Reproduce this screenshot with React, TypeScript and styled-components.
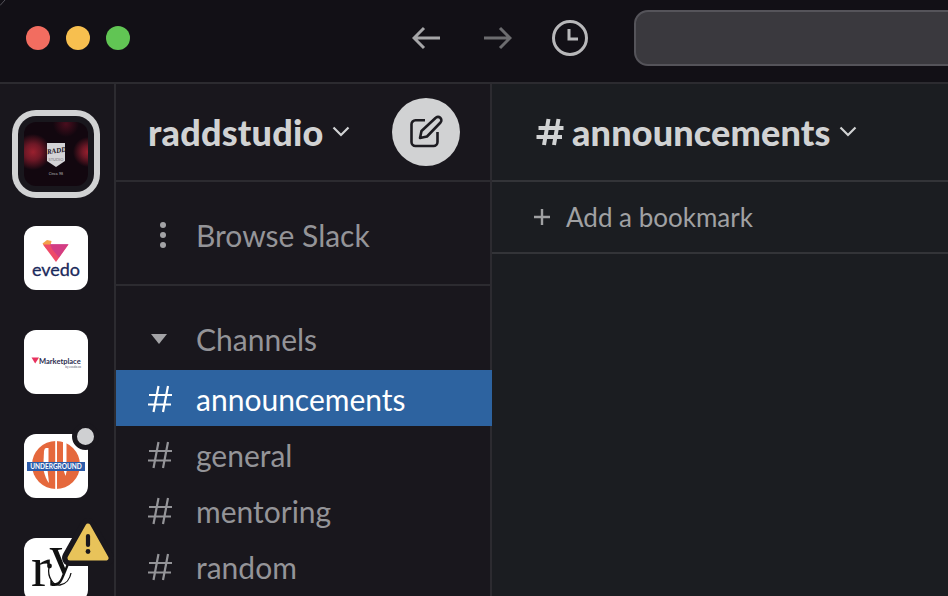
import React from "react";
import styled, { createGlobalStyle } from "styled-components";

const Global = createGlobalStyle`
  html, body { margin: 0; padding: 0; background: #19171d; }
  body { font-family: "Lato", "Liberation Sans", sans-serif; }
  * { box-sizing: border-box; }
`;

const Window = styled.div`
  position: relative; width: 948px; height: 596px; overflow: hidden;
  display: flex; flex-direction: column; background: #19171d;
`;
const Corner = styled.svg`position: absolute; left: 0; top: 0; display: block;`;
const TitleBar = styled.header`
  height: 84px; flex: none; display: flex; align-items: center;
  background: #121016; border-bottom: 2px solid #2c2b30;
  padding: 0 0 6px 26px; overflow: hidden;
`;
const Lights = styled.div`display: flex; gap: 16px; width: 374px; flex: none;`;
const Light = styled.span<{ $c: string }>`
  width: 24px; height: 24px; border-radius: 50%; background: ${(p) => p.$c};
`;
const Nav = styled.nav`display: flex; align-items: center; gap: 44px; width: 234px; flex: none; padding-left: 12px;`;
const NavIcon = styled.svg<{ $pull?: boolean }>`display: block; flex: none; margin-left: ${(p) => (p.$pull ? "-4px" : "0")};`;
const Search = styled.div`
  width: 400px; height: 56px; flex: none; border-radius: 14px;
  background: #3a393e; border: 2px solid #55545a;
`;
const Body = styled.div`flex: 1; display: flex; min-height: 0;`;
const Rail = styled.aside`
  width: 116px; flex: none; background: #19171d; border-right: 2px solid #2c2b30;
  display: flex; flex-direction: column; align-items: flex-start; gap: 40px;
  padding: 38px 0 0 24px; overflow: hidden;
`;
const Tile = styled.div<{ $selected?: boolean; $bg?: string }>`
  position: relative; width: 64px; height: 64px; flex: none; border-radius: 12px;
  background: ${(p) => p.$bg || "#fff"};
  box-shadow: ${(p) => (p.$selected ? "0 0 0 6px #19171d, 0 0 0 12px #d1d2d3" : "none")};
`;
const TileArt = styled.svg`display: block; width: 64px; height: 64px; border-radius: 12px;`;
const DotBadge = styled.span`
  position: absolute; left: 48px; top: -11px; width: 27px; height: 27px;
  border-radius: 50%; background: #cfd0d2; border: 5px solid #19171d;
`;
const WarnBadge = styled.svg`position: absolute; left: 38px; top: -20px; display: block;`;
const Sidebar = styled.section`
  width: 376px; flex: none; background: #19171d; border-right: 2px solid #2c2b30;
  display: flex; flex-direction: column;
`;
const WorkspaceHead = styled.div`
  height: 98px; flex: none; display: flex; align-items: center;
  padding: 0 30px 0 32px; border-bottom: 2px solid #2c2b30;
`;
const WorkspaceName = styled.h1`
  margin: 0; font-size: 36px; font-weight: 900; color: #d1d2d3; line-height: 1; letter-spacing: 0.2px;
`;
const Chevron = styled.svg`display: block; flex: none; margin-left: 8px;`;
const Compose = styled.button`
  margin-left: auto; width: 68px; height: 68px; border: 0; padding: 0; border-radius: 50%;
  background: #d1d2d3; display: flex; align-items: center; justify-content: center;
`;
const BrowseRow = styled.div`
  height: 104px; flex: none; display: flex; align-items: center;
  border-bottom: 2px solid #2c2b30; padding: 3px 0 0 42px; gap: 28px;
  font-size: 30px; color: #949498;
`;
const Dots = styled.span`display: flex; flex-direction: column; gap: 4px; width: 10px; align-items: center;`;
const Dot = styled.i`width: 6px; height: 6px; border-radius: 50%; background: #a3a3a6;`;
const ChannelHead = styled.div`
  height: 84px; flex: none; display: flex; align-items: center; padding: 33px 0 12px 35px; gap: 29px;
  font-size: 30px; color: #949498;
`;
const Caret = styled.span`
  width: 0; height: 0; border-left: 8px solid transparent; border-right: 8px solid transparent;
  border-top: 10px solid #a3a3a6;
`;
const ChannelRow = styled.div<{ $active?: boolean }>`
  height: 56px; flex: none; display: flex; align-items: center; padding: 1px 0 0 31px; gap: 23px;
  margin-right: ${(p) => (p.$active ? "-2px" : "0")};
  font-size: 30px; color: ${(p) => (p.$active ? "#fff" : "#949498")};
  background: ${(p) => (p.$active ? "#2d63a0" : "transparent")};
  position: relative;
`;
const Main = styled.main`flex: 1; min-width: 0; background: #1b1d21; display: flex; flex-direction: column;`;
const ChannelTitleBar = styled.div`
  height: 98px; flex: none; display: flex; align-items: center; padding-left: 44px;
  border-bottom: 2px solid #333438; font-size: 36px; font-weight: 900; color: #d1d2d3; letter-spacing: 0.15px;
`;
const TitleHash = styled.svg`display: block; flex: none; margin-right: 8px;`;
const Bookmarks = styled.div`
  height: 72px; flex: none; display: flex; align-items: center; padding-left: 41px; gap: 15px;
  border-bottom: 2px solid #333438; font-size: 26px; color: #a0a1a3;
`;
const RowHash = styled.svg`display: block; flex: none;`;

const Hash = () => (
  <RowHash width="26" height="30" viewBox="0 0 26 30">
    <path d="M11.5 2 L6.5 28 M21 2 L16 28 M2 11 H25 M1 20.5 H24" fill="none" stroke="currentColor" strokeWidth="2.2" />
  </RowHash>
);

const Down = () => (
  <Chevron width="18" height="18" viewBox="0 0 18 18">
    <path d="M1.5 4.5 L9 12 L16.5 4.5" fill="none" stroke="#d1d2d3" strokeWidth="2.2" />
  </Chevron>
);

export default function App() {
  return (
    <Window>
      <Global />
      <TitleBar>
        <Lights>
          <Light $c="#f26d60" />
          <Light $c="#f7bf4f" />
          <Light $c="#61c554" />
        </Lights>
        <Nav>
          <NavIcon width="28" height="26" viewBox="0 0 28 26">
            <path d="M28 13 H3 M12 3 L2 13 L12 23" fill="none" stroke="#a6a6a8" strokeWidth="3" />
          </NavIcon>
          <NavIcon width="28" height="26" viewBox="0 0 28 26">
            <path d="M0 13 H25 M16 3 L26 13 L16 23" fill="none" stroke="#6c6c6f" strokeWidth="3" />
          </NavIcon>
          <NavIcon $pull width="36" height="36" viewBox="0 0 36 36">
            <circle cx="18" cy="18" r="16.5" fill="none" stroke="#b8b8ba" strokeWidth="3" />
            <path d="M17 9 V19 H26" fill="none" stroke="#b8b8ba" strokeWidth="3" />
          </NavIcon>
        </Nav>
        <Search />
      </TitleBar>
      <Body>
        <Rail>
          <Tile
            $selected
            $bg="radial-gradient(circle 18px at 9px 30px, #9a202e 0, #6e1826 45%, transparent 100%), radial-gradient(circle 15px at 64px 30px, #9a202e 0, #6e1826 40%, transparent 100%), radial-gradient(circle 13px at 42px 2px, #4a0e1e 0, transparent 100%), #12070f"
          >
            <TileArt viewBox="0 0 64 64">
              <path d="M23 21 H41 V39 L32 45 L23 39 Z" fill="#d4d3d6" />
              <text x="32.5" y="31" textAnchor="middle" fontSize="7" fontWeight="900" fontStyle="italic" fontFamily="Liberation Serif" fill="#17101a" transform="rotate(-8 32 29)">RADD</text>
              <text x="32" y="38.5" textAnchor="middle" fontSize="4" fontFamily="Lato" fill="#77757a">STUDIO</text>
              <text x="32" y="52.5" textAnchor="middle" fontSize="3.5" fontFamily="Lato" fill="#b9b7ba">Cinca. 98</text>
            </TileArt>
          </Tile>
          <Tile>
            <TileArt viewBox="0 0 64 64">
              <path d="M18.5 17.5 L23 14 L27.5 15 L26 22 L22 22.5 Z" fill="#f2a04a" />
              <path d="M19 18.5 H44.5 L32 36 Z" fill="#ee4a68" />
              <path d="M26 18 H44.5 L35 31.5 L28 23 Z" fill="#c93a8c" opacity="0.75" />
              <text x="32" y="49.5" textAnchor="middle" fontSize="18" fontWeight="400" fontFamily="Lato" fill="#1b2a5c" stroke="#1b2a5c" strokeWidth="0.3">evedo</text>
            </TileArt>
          </Tile>
          <Tile>
            <TileArt viewBox="0 0 64 64">
              <path d="M7.5 27.5 H15 L11.2 33.5 Z" fill="#e8315f" />
              <text x="15" y="33.5" fontSize="7.5" fontWeight="700" fontFamily="Lato" fill="#2b2c4f">Marketplace</text>
              <text x="57" y="38" textAnchor="end" fontSize="3" fontFamily="Lato" fill="#55566e">by evedo.co</text>
            </TileArt>
          </Tile>
          <Tile>
            <TileArt viewBox="0 0 64 64">
              <circle cx="32" cy="31" r="24" fill="#e5683c" />
              <path d="M31.2 6 H33 V29 H31.2 Z M31.2 36 H33 V56 H31.2 Z" fill="#fff" />
              <path d="M20 17 Q20.5 14 22 14 H24.5 V28 H19.5 Z" fill="#fff" />
              <path d="M39 4 H42.5 V28 H39 Z M39.5 36 H43 L41.5 42 Z" fill="#fff" />
              <path d="M19.5 36 H23.5 L25 49 Q21.5 45 19.5 36 Z" fill="#fff" />
              <rect x="3" y="28" width="58" height="9" fill="#2c5cab" />
              <text x="32" y="35.2" textAnchor="middle" fontSize="6.5" fontWeight="700" fontFamily="Lato" fill="#fff">UNDERGROUND</text>
            </TileArt>
            <DotBadge />
          </Tile>
          <Tile>
            <TileArt viewBox="0 0 64 64">
              <text fontSize="58" fontFamily="Liberation Serif" fill="#111">
                <tspan x="7" y="48">r</tspan>
                <tspan x="25" y="36">y</tspan>
              </text>
              <path d="M25 29 C23 40 30 48 36 47 C42 46 46 41 47 35" fill="none" stroke="#111" strokeWidth="1.3" />
              <circle cx="25.5" cy="28" r="2.4" fill="#111" />
            </TileArt>
            <WarnBadge width="52" height="50" viewBox="0 0 52 50">
              <path d="M26 8 L44 40 H8 Z" fill="#19171d" stroke="#19171d" strokeWidth="16" strokeLinejoin="round" />
              <path d="M26 8 L44 40 H8 Z" fill="#e8c35a" stroke="#e8c35a" strokeWidth="5" strokeLinejoin="round" />
              <path d="M26 18 V27" stroke="#19171d" strokeWidth="4.2" strokeLinecap="round" />
              <circle cx="26" cy="33.5" r="2.4" fill="#19171d" />
            </WarnBadge>
          </Tile>
        </Rail>
        <Sidebar>
          <WorkspaceHead>
            <WorkspaceName>raddstudio</WorkspaceName>
            <Down />
            <Compose aria-label="Compose">
              <svg width="34" height="34" viewBox="0 0 34 34">
                <path d="M16 5.3 H6.5 A4 4 0 0 0 2.5 9.3 V27 A4 4 0 0 0 6.5 31 H24.5 A4 4 0 0 0 28.5 27 V17" fill="none" stroke="#1d1c21" strokeWidth="2.6" />
                <path d="M11 23 L12.5 16 L26.5 3 A2.8 2.8 0 0 1 31.5 7.5 L18 21.5 Z" fill="none" stroke="#1d1c21" strokeWidth="2.6" strokeLinejoin="round" />
              </svg>
            </Compose>
          </WorkspaceHead>
          <BrowseRow>
            <Dots><Dot /><Dot /><Dot /></Dots>
            Browse Slack
          </BrowseRow>
          <ChannelHead><Caret />Channels</ChannelHead>
          <ChannelRow $active><Hash />announcements</ChannelRow>
          <ChannelRow><Hash />general</ChannelRow>
          <ChannelRow><Hash />mentoring</ChannelRow>
          <ChannelRow><Hash />random</ChannelRow>
        </Sidebar>
        <Main>
          <ChannelTitleBar>
            <TitleHash width="28" height="30" viewBox="0 0 28 30">
              <path d="M12.5 2 L8 28 M22.5 2 L18 28 M2.5 11 H27.5 M0.5 20 H26" fill="none" stroke="#d1d2d3" strokeWidth="4" />
            </TitleHash>
            announcements
            <Down />
          </ChannelTitleBar>
          <Bookmarks>
            <svg width="18" height="18" viewBox="0 0 18 18"><path d="M9 1 V17 M1 9 H17" stroke="#a0a1a3" strokeWidth="2.4" /></svg>
            Add a bookmark
          </Bookmarks>
        </Main>
      </Body>
      <Corner width="8" height="8" viewBox="0 0 8 8">
        <path d="M0 5.5 L5 0" fill="none" stroke="#55545a" strokeWidth="1" />
      </Corner>
    </Window>
  );
}
